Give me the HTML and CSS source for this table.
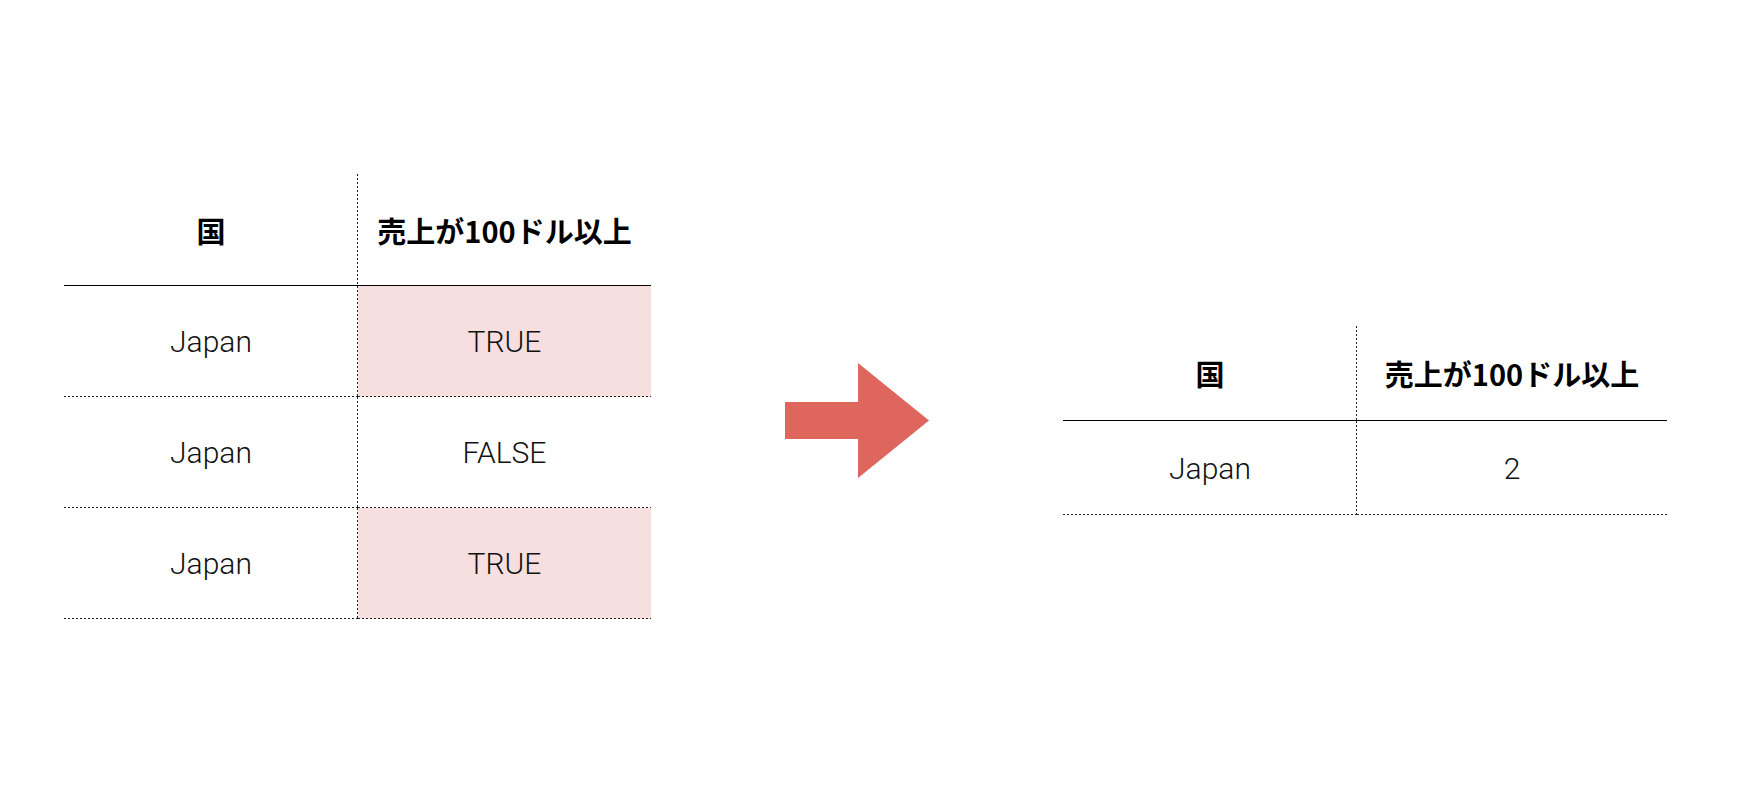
FILE: index.html
```html
<!DOCTYPE html>
<html lang="ja">
<head>
<meta charset="utf-8">
<title>集計</title>
<link rel="stylesheet" href="styles.css">
</head>
<body>
<div class="stage">
  <div class="tbl tbl-left">
    <div class="row row-head">
      <div class="cell head col1">国</div>
      <div class="cell head">売上が100ドル以上</div>
    </div>
    <div class="row row-body">
      <div class="cell body col1">Japan</div>
      <div class="cell body hl">TRUE</div>
    </div>
    <div class="row row-body">
      <div class="cell body col1">Japan</div>
      <div class="cell body">FALSE</div>
    </div>
    <div class="row row-body">
      <div class="cell body col1">Japan</div>
      <div class="cell body hl">TRUE</div>
    </div>
  </div>
  <div class="arrow">
    <svg width="144" height="115" viewBox="0 0 144 115"><polygon points="0,39 73,39 73,0 144,57.5 73,115 73,76 0,76" fill="#de665c"/></svg>
  </div>
  <div class="tbl tbl-right">
    <div class="row row-head">
      <div class="cell head col1">国</div>
      <div class="cell head">売上が100ドル以上</div>
    </div>
    <div class="row row-body">
      <div class="cell body col1">Japan</div>
      <div class="cell body">2</div>
    </div>
  </div>
</div>
</body>
</html>
```
FILE: styles.css
```css
html, body {
  margin: 0;
  padding: 0;
  background: #fff;
}
body {
  width: 1740px;
  height: 798px;
  overflow: hidden;
  font-family: "Roboto", "Liberation Sans", "Noto Sans CJK JP", sans-serif;
  color: #111;
}
.stage {
  display: flex;
  align-items: flex-start;
  padding-left: 64px;
}
.tbl {
  display: flex;
  flex-direction: column;
}
.row {
  display: grid;
  box-sizing: border-box;
}
.tbl-left {
  margin-top: 174px;
  width: 587px;
}
.tbl-left .row { grid-template-columns: 294px 293px; }
.tbl-left .row-head { height: 112px; }
.tbl-left .row-body { height: 111px; }
.tbl-right {
  margin-top: 326px;
  margin-left: 134px;
  width: 604px;
}
.tbl-right .row { grid-template-columns: 294px 310px; }
.tbl-right .row-head { height: 95px; }
.tbl-right .row-body { height: 94px; }
.row-head {
  border-bottom: 1px solid #000;
}
.arrow {
  margin-top: 363px;
  margin-left: 134px;
  display: flex;
}
.cell {
  display: flex;
  align-items: center;
  justify-content: center;
  box-sizing: border-box;
  min-height: 0;
}
.head {
  font-family: "Noto Sans CJK JP", sans-serif;
  font-weight: 700;
  font-size: 29px;
  color: #000;
}
.body {
  font-size: 30px;
  font-weight: 300;
  background-image: linear-gradient(to right, #222 50%, transparent 50%);
  background-size: 4px 1px;
  background-position: left bottom;
  background-repeat: repeat-x;
}
.col1 {
  background-image: linear-gradient(to bottom, #222 50%, transparent 50%);
  background-size: 1px 4px;
  background-position: right top;
  background-repeat: repeat-y;
}
.body.col1 {
  background-image:
    linear-gradient(to bottom, #222 50%, transparent 50%),
    linear-gradient(to right, #222 50%, transparent 50%);
  background-size: 1px 4px, 4px 1px;
  background-position: right top, left bottom;
  background-repeat: repeat-y, repeat-x;
}
.hl {
  background-color: #f7dfdf;
}
```
